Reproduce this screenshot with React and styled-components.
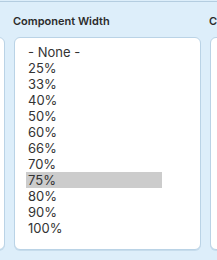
import styled, { createGlobalStyle } from "styled-components";

const Global = createGlobalStyle`
  html, body {
    margin: 0;
    padding: 0;
    background: #ddeefa;
    overflow: hidden;
  }
`;

const Panel = styled.div`
  margin-top: 1px;
  border-top: 1px solid #b4cde0;
  background: #ddeefa;
  height: 258px;
  overflow: hidden;
`;

const Fields = styled.div`
  display: flex;
  gap: 9px;
  margin-left: -182px;
  padding-top: 12px;
`;

const Field = styled.div`
  flex: 0 0 187px;
  display: flex;
  flex-direction: column;
`;

const Label = styled.div`
  font-family: Inter, "Liberation Sans", sans-serif;
  font-size: 11px;
  font-weight: 600;
  line-height: 14px;
  color: #2b2b2b;
  height: 14px;
  margin-left: -1px;
  margin-bottom: 9px;
  white-space: nowrap;
  overflow: hidden;
`;

const Box = styled.div`
  background: #fff;
  border: 1px solid #bad3e6;
  border-radius: 6px;
  box-shadow: 0 1px 0 #c6dcec;
  height: 205px;
  padding: 6px 11px 0;
`;

const List = styled.div`
  width: 136px;
`;

const Option = styled.div`
  font-family: Inter, "Liberation Sans", sans-serif;
  font-size: 13px;
  line-height: 16px;
  height: 16px;
  padding: 0 2px;
  color: #333;
  background: ${(p) => (p.$selected ? "#cccccc" : "transparent")};
  white-space: nowrap;
`;

const options = ["- None -", "25%", "33%", "40%", "50%", "60%", "66%", "70%", "75%", "80%", "90%", "100%"];

const fields = [
  { label: "", selected: null, items: [] },
  { label: "Component Width", selected: "75%", items: options },
  { label: "C", selected: null, items: [] },
];

export default function App() {
  return (
    <>
      <Global />
      <Panel>
        <Fields>
          {fields.map((f, i) => (
            <Field key={i}>
              <Label>{f.label}</Label>
              <Box>
                <List>
                  {f.items.map((o) => (
                    <Option key={o} $selected={o === f.selected}>
                      {o}
                    </Option>
                  ))}
                </List>
              </Box>
            </Field>
          ))}
        </Fields>
      </Panel>
    </>
  );
}
